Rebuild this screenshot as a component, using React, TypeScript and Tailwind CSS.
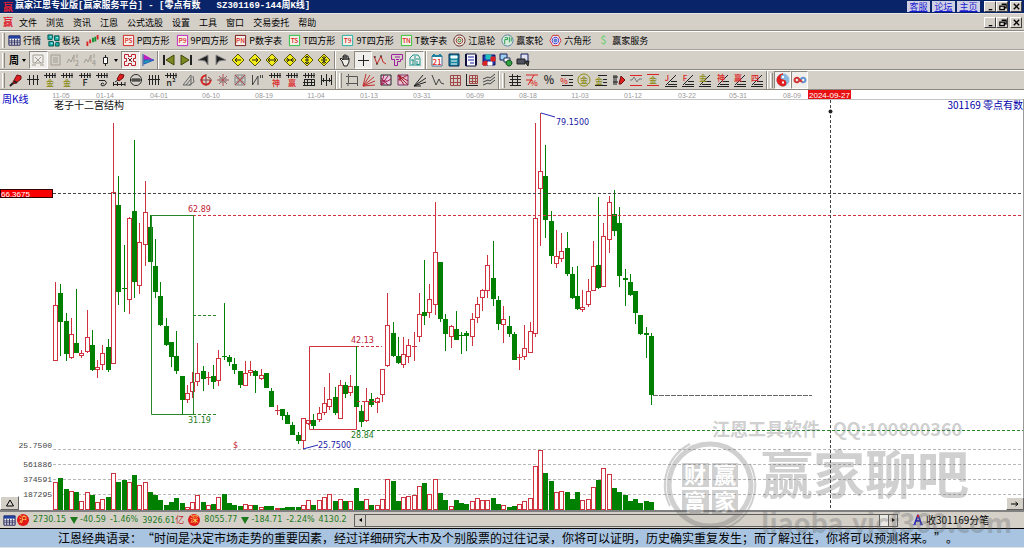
import React from "react";

type Mark = {
  d?: string;
  s?: string;
  f?: string;
  w?: number;
  t?: string;
  x?: number;
  y?: number;
  size?: number;
};

type IconDef = { name: string; marks: Mark[]; pressed?: boolean };

// [direction, high, body top, body bottom, low, volume top]
type Candle = ["r" | "g", number, number, number, number, number];

const RED = "#cf3340";
const GREEN = "#008000";
const K = "#222222";
const R = "#dd2222";
const Y = "#8a8a10";
const G = "#a09c94";

const candles: Candle[] = [
  ["r", 282, 305, 361, 361, 482],
  ["g", 284, 293, 322, 356, 478],
  ["g", 313, 321, 354, 361, 489],
  ["r", 318, 334, 358, 359, 491],
  ["g", 289, 343, 353, 353, 492],
  ["r", 350, 353, 356, 358, 501],
  ["r", 310, 337, 352, 353, 492],
  ["g", 330, 345, 370, 371, 495],
  ["r", 360, 367, 370, 378, 502],
  ["r", 345, 353, 365, 370, 499],
  ["g", 339, 347, 370, 372, 497],
  ["r", 123, 192, 364, 364, 473],
  ["g", 176, 205, 292, 305, 482],
  ["g", 245, 288, 289, 312, 480],
  ["r", 217, 218, 300, 314, 482],
  ["g", 140, 211, 282, 298, 475],
  ["r", 223, 242, 286, 294, 485],
  ["r", 181, 212, 245, 266, 482],
  ["g", 215, 227, 262, 262, 492],
  ["g", 239, 266, 292, 298, 495],
  ["g", 282, 296, 325, 326, 500],
  ["g", 318, 326, 345, 346, 505],
  ["g", 342, 342, 357, 367, 502],
  ["g", 331, 356, 371, 374, 498],
  ["g", 376, 376, 400, 414, 503],
  ["r", 385, 393, 400, 403, 507],
  ["r", 372, 382, 392, 398, 502],
  ["r", 343, 373, 382, 386, 495],
  ["g", 366, 371, 379, 391, 502],
  ["r", 372, 377, 378, 385, 505],
  ["g", 365, 376, 382, 389, 504],
  ["r", 350, 358, 381, 386, 497],
  ["g", 303, 356, 357, 360, 494],
  ["g", 355, 357, 362, 366, 503],
  ["g", 358, 364, 370, 374, 505],
  ["g", 371, 371, 385, 388, 506],
  ["r", 361, 373, 386, 386, 504],
  ["r", 361, 370, 373, 376, 505],
  ["g", 370, 371, 376, 393, 505],
  ["r", 369, 375, 379, 380, 507],
  ["g", 373, 373, 388, 388, 506],
  ["g", 388, 391, 407, 407, 506],
  ["r", 405, 410, 411, 415, 508],
  ["g", 409, 409, 416, 420, 508],
  ["g", 412, 415, 424, 424, 507],
  ["g", 422, 425, 435, 435, 507],
  ["g", 432, 435, 441, 444, 507],
  ["r", 418, 418, 441, 449, 505],
  ["r", 420, 420, 424, 425, 500],
  ["g", 414, 420, 426, 429, 505],
  ["r", 407, 413, 420, 422, 500],
  ["r", 387, 403, 413, 415, 497],
  ["r", 373, 399, 407, 410, 494],
  ["g", 387, 397, 413, 415, 501],
  ["r", 380, 385, 419, 419, 499],
  ["g", 382, 385, 394, 398, 501],
  ["r", 375, 386, 393, 396, 501],
  ["g", 386, 386, 407, 407, 488],
  ["g", 405, 411, 422, 427, 501],
  ["r", 388, 401, 421, 422, 499],
  ["g", 393, 399, 405, 407, 505],
  ["r", 397, 398, 403, 413, 505],
  ["r", 369, 369, 395, 401, 499],
  ["r", 293, 325, 366, 367, 479],
  ["g", 322, 333, 356, 357, 481],
  ["g", 337, 356, 363, 364, 501],
  ["r", 337, 354, 365, 368, 497],
  ["r", 339, 345, 357, 363, 496],
  ["r", 332, 346, 347, 361, 495],
  ["r", 293, 314, 337, 342, 486],
  ["g", 260, 312, 316, 325, 483],
  ["r", 284, 299, 313, 318, 494],
  ["r", 202, 252, 305, 315, 479],
  ["g", 262, 262, 319, 322, 493],
  ["g", 314, 319, 334, 351, 500],
  ["r", 325, 326, 337, 348, 506],
  ["g", 311, 329, 340, 340, 500],
  ["g", 332, 335, 336, 354, 503],
  ["g", 331, 333, 336, 351, 504],
  ["r", 313, 319, 337, 346, 501],
  ["r", 297, 304, 318, 323, 498],
  ["r", 289, 290, 298, 311, 500],
  ["r", 255, 265, 291, 298, 500],
  ["g", 241, 278, 299, 306, 498],
  ["g", 296, 300, 324, 330, 504],
  ["r", 306, 319, 325, 343, 505],
  ["g", 316, 326, 334, 337, 507],
  ["g", 332, 334, 360, 360, 506],
  ["r", 354, 357, 358, 370, 504],
  ["r", 325, 348, 357, 360, 501],
  ["r", 322, 331, 353, 353, 498],
  ["r", 123, 218, 334, 337, 466],
  ["r", 113, 171, 189, 246, 450],
  ["g", 145, 176, 220, 238, 473],
  ["g", 211, 221, 256, 264, 481],
  ["r", 230, 256, 264, 268, 492],
  ["r", 233, 251, 259, 262, 491],
  ["g", 232, 248, 274, 276, 492],
  ["g", 267, 274, 298, 299, 499],
  ["g", 266, 296, 309, 310, 492],
  ["r", 290, 307, 310, 312, 500],
  ["r", 279, 291, 305, 307, 499],
  ["r", 241, 266, 291, 291, 487],
  ["g", 197, 265, 288, 289, 480],
  ["r", 223, 236, 287, 287, 468],
  ["r", 196, 202, 240, 253, 474],
  ["g", 190, 214, 231, 236, 488],
  ["g", 207, 223, 276, 287, 492],
  ["g", 269, 278, 280, 306, 495],
  ["g", 274, 282, 295, 296, 501],
  ["g", 291, 291, 313, 324, 499],
  ["g", 315, 315, 334, 335, 503],
  ["g", 327, 333, 335, 358, 501],
  ["g", 333, 336, 395, 405, 502],
];

const dates: [number, string][] = [
  [61, "11-05"],
  [105, "01-14"],
  [159, "04-01"],
  [211, "06-10"],
  [264, "08-19"],
  [316, "11-04"],
  [369, "01-13"],
  [422, "03-31"],
  [475, "06-09"],
  [528, "08-18"],
  [580, "11-03"],
  [633, "01-12"],
  [687, "03-22"],
  [738, "05-31"],
  [792, "08-09"],
];

const menus = ["文件", "浏览", "资讯", "江恩", "公式选股", "设置", "工具", "窗口", "交易委托", "帮助"];

const comb: Mark = { d: "M1 2.5H13M3.5 0V5M6.5 0V5M9.5 0V5M12 0V5", s: K };
const fan: Mark = { d: "M2 12L12 2M1 13.5H13M4 11.5H13M7 8.5H13", s: K };
const diamond: Mark = { d: "M7 1L13 7L7 13L1 7Z", s: "#55550a", f: "#f4ec18" };

const boxed = (t: string, c: string): Mark[] => [
  { d: "M1.5 1.5H12.5V12.5H1.5Z", s: c, f: "#f4efe6", w: 1 },
  { t, s: R, x: 7, y: 10, size: 7 },
];

const rings = (a: string, b: string, c: string): Mark[] => [
  { d: "M7 1A6 6 0 1 1 6.9 1Z", s: a, f: "#eeeae0", w: 1 },
  { d: "M7 3.5A3.5 3.5 0 1 1 6.9 3.5Z", s: b },
  { d: "M7 5.5A1.5 1.5 0 1 1 6.9 5.5Z", s: c },
];

const features: { label: string; marks: Mark[] }[] = [
  {
    label: "行情",
    marks: [
      { d: "M1 2H13V12H1Z", s: "#101050", f: "#ffffff" },
      { d: "M1 3.5H13", s: "#2040a0", w: 3 },
      { d: "M1 7.5H13M1 9.5H13M4 5V12M7 5V12M10 5V12", s: "#303060" },
    ],
  },
  {
    label: "板块",
    marks: [
      { d: "M1 1H6V6H1ZM8 2H13V7H8ZM2 8H7V13H2ZM9 9H13V13H9Z", s: "#06504c", f: "#18b0a8" },
      { d: "M3 3H5M10 4H12M4 10H6M6 5L9 10", s: "#d8ffff" },
    ],
  },
  {
    label: "K线",
    marks: [
      { d: "M1.5 8V13M4.5 6V10M12.5 1V6", s: R, w: 2 },
      { d: "M7.5 4V9M10 3V8", s: "#109030", w: 2 },
    ],
  },
  { label: "P四方形", marks: boxed("PS", "#d02020") },
  { label: "9P四方形", marks: boxed("P9", "#c020c0") },
  { label: "P数字表", marks: boxed("PN", "#701010") },
  { label: "T四方形", marks: boxed("TS", "#20c040") },
  { label: "9T四方形", marks: boxed("T9", "#20b0a0") },
  { label: "T数字表", marks: boxed("TN", "#30c030") },
  { label: "江恩轮", marks: rings("#602020", "#902828", "#107010") },
  {
    label: "赢家轮",
    marks: [
      { d: "M7 1A6 6 0 1 1 6.9 1Z", s: "#5080a0", f: "#d8ecdc" },
      { d: "M4 4H7V6H4V11M9 3V9M11 4V8", s: "#209848" },
    ],
  },
  {
    label: "六角形",
    marks: [
      { d: "M4 1.5H10L13 7L10 12.5H4L1 7Z", s: "#d03030", f: "#f0e8f0" },
      { d: "M7 3.5A3.5 3.5 0 1 1 6.9 3.5Z", s: "#3030d0" },
      { d: "M7 5.5A1.5 1.5 0 1 1 6.9 5.5Z", s: "#3030d0", f: "#60c0c0" },
    ],
  },
  { label: "赢家服务", marks: [{ t: "$", s: "#78d078", x: 7, y: 11, size: 12 }] },
];

const viewTools: IconDef[] = [
  {
    name: "叠加",
    pressed: true,
    marks: [{ d: "M2 2H12V10H2ZM4 4L10 10M10 4L4 10M1 12H5M9 12H13", s: G }],
  },
  { name: "文档", marks: [{ d: "M2 2H11V12H2ZM4 5H9M4 7H9M4 9H9", s: G }] },
  { name: "二分", marks: [{ d: "M1 10L3 6L5 9L8 2V9M11 1V5", s: G }, { t: "2", s: G, x: 11, y: 13, size: 7 }] },
  { name: "四分", marks: [{ d: "M1 10L3 6L5 9L8 2V9M11 1V5", s: G }, { t: "4", s: G, x: 11, y: 13, size: 7 }] },
];

const modeTools: IconDef[] = [
  {
    name: "区间",
    pressed: true,
    marks: [
      { d: "M1.5 1.5H5.5V3.5H8.5V1.5H12.5V5.5H10.5V8.5H12.5V12.5H8.5V10.5H5.5V12.5H1.5V8.5H3.5V5.5H1.5Z", s: "#c02030" },
      { d: "M5 5L9 9M9 5L6 8", s: "#602020" },
    ],
  },
  {
    name: "分布",
    marks: [
      { d: "M3 2L12 7H3Z", s: "#c020c0", f: "#c020c0" },
      { d: "M3 7H13L3 11Z", s: "#2060c0", f: "#20a0b0" },
      { d: "M2 1V13", s: "#2050a0" },
    ],
  },
];

const moveTools: IconDef[] = [
  { name: "首页", marks: [{ d: "M2 2V12", s: K, w: 2 }, { d: "M12 2V12L4 7Z", s: "#404808", f: "#7c8820" }] },
  { name: "末页", marks: [{ d: "M12 2V12", s: K, w: 2 }, { d: "M2 2V12L10 7Z", s: "#404808", f: "#7c8820" }] },
  { name: "左移", marks: [{ d: "M12 2V12L9 8L2 7Z", s: "#888", f: K }] },
  { name: "右移", marks: [{ d: "M2 2V12L5 8L12 7Z", s: "#888", f: K }] },
  { name: "向左", marks: [diamond, { d: "M10 7H4M6 5L4 7L6 9", s: K }] },
  { name: "向右", marks: [diamond, { d: "M4 7H10M8 5L10 7L8 9", s: K }] },
  { name: "横向放大", marks: [diamond, { d: "M3 7H11M5 5L3 7L5 9M9 5L11 7L9 9", s: K }] },
  { name: "横向缩小", marks: [diamond, { d: "M3 7H11M4 5L6 7L4 9M10 5L8 7L10 9", s: K }] },
  { name: "纵向放大", marks: [diamond, { d: "M7 3V11M5 5L7 3L9 5M5 9L7 11L9 9M5 7H9", s: K }] },
  { name: "纵向缩小", marks: [diamond, { d: "M7 3V11M5 4L7 6L9 4M5 10L7 8L9 10M4 7H10", s: K }] },
];

const cursorTools: IconDef[] = [
  { name: "平移", marks: [{ d: "M4 8L2 6L3 5L5 7V3H6V7V2H8V7V3H10V7V5H11V9L9 13H6Z", s: K, f: "#f0ede6" }] },
  { name: "十字光标", pressed: true, marks: [{ d: "M7.5 2V13M2 7.5H13", s: K }] },
  { name: "波段", marks: [{ d: "M1 3L4 11L6 7L8 3L10 9L13 11", s: "#c02828" }, { d: "M1 4H3M3 11H5M7 3H9", s: K }] },
  { name: "形态", marks: [{ d: "M2 1.5H12.5V6.5H10.5V8.5H7.5V12.5H4.5V6.5H1.5V1.5M5 4H10M6 6.5H9", s: "#a020a0" }] },
  {
    name: "智能",
    pressed: true,
    marks: [{ d: "M2 11V5L5 2H10L12 5V11L9 12V8M5 12V7M7 3V11M3 7H6M8 6H11M1 12H13", s: "#189088" }],
  },
];

const fileTools: IconDef[] = [
  {
    name: "日历",
    marks: [
      { d: "M2 3H12V13H2Z", s: "#507090", f: "#ffffff" },
      { d: "M2 3H12M4 1V4M10 1V4", s: "#2080a0", w: 2 },
      { t: "21", s: R, x: 7, y: 12, size: 8 },
    ],
  },
  {
    name: "计算器",
    marks: [
      { d: "M2 1H12V13H2Z", s: "#082858", f: "#1888a0" },
      { d: "M4 3H10V5H4Z", s: "#ffffff", f: "#d8f8f8" },
      { d: "M4 8H10M4 11H10", s: "#ffffff" },
    ],
  },
  {
    name: "记事",
    marks: [
      { d: "M2 1H12V13H2Z", s: "#101040", f: "#f8f8ff" },
      { d: "M4 4H10M4 7H10M6 10H10", s: "#2020a0" },
      { d: "M2 1V13M12 2V12", s: "#101040", w: 2 },
    ],
  },
  {
    name: "保存",
    marks: [
      { d: "M1 2H13V12H1Z", s: "#101060", f: "#2038b0" },
      { d: "M4 2H9V6H4Z", s: "#20c0c0", f: "#20c0c0" },
      { d: "M1 9L5 8V12H1ZM9 4H13V8H9Z", s: R, f: R },
      { d: "M6 9H10V12H6Z", s: "#ffffff", f: "#ffffff" },
    ],
  },
  {
    name: "同步",
    marks: [
      { d: "M1 1H8V7H1Z", s: "#102060", f: "#a0d0f0" },
      { d: "M5 5H11V9H5Z", s: "#203060", f: "#ffffff" },
      { d: "M10 7A3 3 0 1 1 9.9 7Z", s: "#084018", f: "#30a040" },
    ],
  },
  {
    name: "打印",
    marks: [
      { d: "M5 1H12V8H5Z", s: "#102060", f: "#e0e0f0" },
      { d: "M1 6H9V11H1Z", s: K, f: "#505060" },
      { d: "M9 9L12 13L13 8Z", s: K, f: "#404040" },
    ],
  },
];

const pencil: Mark[] = [
  { d: "M4 9L8 2L12 3L12 6L7 10L4 11Z", s: "#701010", f: "#e02020" },
  { d: "M1 13L4 10M5 8L8 10", s: K, w: 2 },
];

const gannTools: IconDef[] = [
  { name: "画笔", marks: pencil },
  { name: "等距", marks: [{ d: "M1 6.5H13M3.5 2V12M7.5 2V12M11.5 2V12", s: K }] },
  { name: "黄金一", marks: [comb, { t: "金", s: Y, x: 7, y: 13, size: 8 }] },
  { name: "黄金二", marks: [comb, { t: "金", s: Y, x: 7, y: 13, size: 8 }] },
  { name: "斐波", marks: [comb, { t: "F", s: K, x: 7, y: 13, size: 9 }] },
  { name: "螺旋", marks: [comb, { d: "M4 7.5H10Q13 10 10 12Q6 14 6 11Q7 9 9 11", s: K }] },
  {
    name: "标尺",
    marks: [
      { d: "M5 6L8 1L12 2L11 5L7 8Z", s: "#701010", f: "#e02020" },
      { d: "M1.5 9V13M5.5 9V13M9.5 9V13M13 9V13M1 11.5H13M3 9L6 7", s: K },
    ],
  },
  { name: "周期圆", marks: [{ d: "M7 1.5A5.5 5.5 0 1 1 6.9 1.5ZM1 7H13M4 5V9M6 5V9M8 5V9M10 5V9", s: K }] },
  { name: "四线", marks: [{ d: "M1 6.5H13M2.5 2V12M5.5 2V12M8.5 2V12M11.5 2V12", s: K }] },
  { name: "平方", marks: [comb, { t: "n²", s: K, x: 7, y: 13, size: 9 }] },
  { name: "三角", marks: [{ d: "M2 12L10 2V12ZM5 12L10 6M12 3L13 9L8 12", s: "#666666" }] },
  { name: "圆弧", marks: [{ d: "M7 2.5A4.5 4.5 0 1 0 11.5 7", s: R, w: 2 }, { d: "M1 7H13M7 1V13M9 4L12 6", s: "#804040" }] },
  { name: "星射", marks: [{ d: "M7 1V13M1 7H13M3 3L11 11M11 3L3 11", s: "#b05050" }, { d: "M4 5H10V9H4Z", s: "#888888" }] },
  { name: "方射", marks: [{ d: "M2 2H12V12H2ZM5 2V12M9 2V12M2 5H12M2 9H12", s: "#888888" }, { d: "M2 2L12 12M12 2L2 12", s: "#b04848" }] },
  { name: "波折", marks: [{ d: "M2.5 2V12L8 3V12M10.5 2V5M12.5 2V5", s: "#444444" }] },
  { name: "神线", marks: [comb, { t: "神", s: R, x: 8, y: 13, size: 8 }] },
  { name: "赢线", marks: [comb, { t: "赢", s: R, x: 7, y: 13, size: 8 }] },
  { name: "表格", marks: [comb, { d: "M2.5 6.5H12.5V12M2.5 6V12M5.5 6V13M9.5 6V13M1 9.5H13M1 12.5H13", s: K }] },
  { name: "对称", marks: [{ d: "M2.5 2V12M12.5 2V12M7.5 1V13M2 7.5H12M4.5 5V9M10.5 5V9", s: K }] },
];

const rays: Mark = { d: "M1 13L4 1M1 13L8 2M1 13L12 4M1 13L13 8M1 13L13 12", s: "#c03030" };

const shapeTools: IconDef[] = [
  { name: "矩形", marks: [{ d: "M3.5 3.5H12.5V10.5H3.5ZM1 3.5H3M3.5 1V3M12.5 10V13M1 10.5H3V13", s: "#555555" }] },
  { name: "扇形", marks: [rays] },
  { name: "框扇", marks: [{ d: "M2 2H12V12H2Z", s: K, f: "#e8c8e0" }, { d: "M2 12L5 2M2 12L9 3M2 12L12 6M2 5L9 12M1 8H8", s: "#a02050" }] },
  { name: "角扇", marks: [{ d: "M2 2H12V12H2Z", s: "#803070", f: "#e8c0d0" }, { d: "M2 2L12 12M2 2L12 8M2 2L8 12M2 7L12 2M4 2V8", s: "#a02030" }] },
  { name: "速度线", marks: [{ d: "M1 13L10 2M1 13L13 5M1 13L13 9M1 13H8", s: K }] },
  { name: "折线", marks: [{ d: "M1 2L5 12L8 6L10 10L13 11", s: "#444444" }] },
  { name: "网格", marks: [{ d: "M2.5 2.5H12.5V12.5H2.5ZM5.5 2V12M9.5 2V12M2 5.5H12M2 9.5H12", s: "#a04848" }] },
  { name: "量格", marks: [{ d: "M1.5 1V13M1 12.5H13", s: K }, { d: "M4.5 2.5H12.5V10.5H4.5ZM7.5 2V10M10.5 2V10M4 5.5H12M4 8.5H12", s: "#a04848" }] },
  { name: "平行", marks: [{ d: "M1 6L6 4L8 5L13 1M1 9L6 7L8 8L13 4M1 12L6 10L8 11L13 7", s: "#444444" }] },
];

const percentTools: IconDef[] = [
  { name: "梯形", marks: [{ d: "M4.5 1V13M9.5 2V12M1 3.5H13M2 6.5H13M1 9.5H13M2 12.5H13", s: K }] },
  { name: "斜率", marks: [{ d: "M1 2H13M3 12L9 2M1 7H7", s: R }, { t: "%", s: R, x: 9, y: 13, size: 8 }] },
  { name: "百分比", marks: [{ t: "%", s: K, x: 7, y: 11, size: 11 }] },
  { name: "百分线", marks: [{ d: "M1 2.5H13M9 6.5H13M9 9.5H13M2 12.5H13", s: K }, { t: "%", s: R, x: 4, y: 11, size: 8 }] },
  { name: "金圆", marks: [{ d: "M7 1A6 6 0 1 1 6.9 1Z", s: Y }, { t: "金", s: Y, x: 7, y: 10, size: 8 }] },
  { name: "金线", marks: [{ d: "M4 2.5H13M9 6.5H13M9 9.5H13M1 12.5H13", s: K }, { t: "金", s: Y, x: 5, y: 11, size: 8 }] },
  { name: "标注", marks: [{ d: "M2 2V12M4 2V12M1 4H6M1 9H6", s: K }, { d: "M7 11L9 3L13 7L9 11Z", s: "#701010", f: "#e02020" }] },
  { name: "通道", marks: [{ d: "M1 2.5H13M1 12.5H13", s: R }, { d: "M1 7H3L5 4L8 9L10 6H13", s: "#777777" }] },
  { name: "金带", marks: [{ d: "M1 1.5H13M1 12.5H13", s: R }, { t: "金", s: Y, x: 7, y: 10, size: 8 }] },
  { name: "江线", marks: [fan, { t: "J", s: R, x: 3, y: 8, size: 8 }] },
  { name: "斐线", marks: [fan, { t: "F", s: R, x: 4, y: 8, size: 8 }] },
  { name: "金扇", marks: [fan, { t: "金", s: Y, x: 5, y: 8, size: 8 }] },
  { name: "神扇", marks: [fan, { t: "神", s: R, x: 5, y: 8, size: 8 }] },
  { name: "赢扇", marks: [fan, { t: "赢", s: R, x: 5, y: 8, size: 8 }] },
  { name: "四扇", marks: [fan, { t: "四", s: R, x: 5, y: 8, size: 8 }] },
];

const yinTools: IconDef[] = [
  {
    name: "太极",
    pressed: true,
    marks: [
      { d: "M7 1A6 6 0 1 1 6.9 1Z", s: "#88b8e0", f: "#88b8e0" },
      { d: "M7 1A6 6 0 0 0 7 13A3 3 0 0 0 7 7A3 3 0 0 1 7 1Z", s: "#e02020", f: "#e02020" },
      { d: "M6 9.5H8M6 4H8", s: "#ffffff", w: 2 },
    ],
  },
  {
    name: "循环",
    pressed: true,
    marks: [
      { d: "M9 9Q12 10 12.5 7Q12 4 9 5L7 7", s: "#6090d0", w: 2 },
      { d: "M7 7L5 9Q2 10 1.5 7Q2 4 5 5L9 9", s: "#d03030", w: 2 },
    ],
  },
];

const Icon = ({ marks, className }: { marks: Mark[]; className?: string }) => (
  <svg viewBox="0 0 14 14" className={className ?? "h-[14px] w-[14px] shrink-0 overflow-visible"} aria-hidden="true">
    {marks.map((m, i) =>
      m.t ? (
        <text key={i} x={m.x} y={m.y} fontSize={m.size} fill={m.s} textAnchor="middle" fontWeight="500">
          {m.t}
        </text>
      ) : (
        <path key={i} d={m.d} stroke={m.s} strokeWidth={m.w ?? 1} fill={m.f ?? "none"} />
      )
    )}
  </svg>
);

const Grip = () => (
  <div className="mx-[2px] h-[15px] w-[3px] shrink-0 border-l border-r border-l-white border-r-[#8c8880]" />
);

const Divider = () => (
  <div className="mx-px h-[18px] w-[2px] shrink-0 border-l border-r border-l-[#8c8880] border-r-white" />
);

const BandBreak = () => (
  <div className="flex w-[8px] shrink-0 items-center justify-between pr-px">
    <div className="h-[18px] w-[2px] border-l border-r border-l-[#8c8880] border-r-white" />
    <div className="h-[15px] w-[3px] border-l border-r border-l-white border-r-[#8c8880]" />
  </div>
);

const ToolGroup = ({ tools, className }: { tools: IconDef[]; className: string }) => (
  <div className={`flex h-full shrink-0 items-center ${className}`}>
    {tools.map((tool) => (
      <button
        key={tool.name}
        title={tool.name}
        aria-label={tool.name}
        className={
          tool.pressed
            ? "flex h-[18px] flex-1 items-center justify-center border border-t-[#8c8880] border-r-white border-b-white border-l-[#8c8880] bg-[#f0eeea]"
            : "flex h-[18px] flex-1 items-center justify-center"
        }
      >
        <Icon marks={tool.marks} />
      </button>
    ))}
  </div>
);

const WindowButtons = () => (
  <div className="flex shrink-0">
    {[
      { name: "最小化", d: "M3 8.5H7" },
      { name: "还原", d: "M4 2.5H9V6.5H7M2 4.5H7V8.5H2Z" },
      { name: "关闭", d: "M2 2L8 8M8 2L2 8" },
    ].map((b) => (
      <button
        key={b.name}
        aria-label={b.name}
        className="flex h-[11px] w-[12px] items-center justify-center border border-t-white border-r-[#404040] border-b-[#404040] border-l-white bg-[#d4d0c8] last:ml-[2px]"
      >
        <svg viewBox="0 0 10 10" className="h-[9px] w-[9px]" aria-hidden="true">
          <path d={b.d} stroke="#000" strokeWidth="1.4" fill="none" />
        </svg>
      </button>
    ))}
  </div>
);

const Candles = () => (
  <g shapeRendering="crispEdges">
    {candles.map(([dir, high, top, bottom, low, vol], i) => {
      const x = Math.round(55 + i * 5.274);
      const c = dir === "r" ? RED : GREEN;
      const doji = bottom - top <= 1;
      return (
        <g key={i} stroke={c} fill={dir === "r" ? "#fff" : c}>
          <path d={`M${x + 0.5} ${high}V${low}`} />
          {doji ? (
            <path d={`M${x - 2} ${top + 0.5}H${x + 3}`} />
          ) : (
            <rect x={x - 1.5} y={top + 0.5} width="4" height={bottom - top - 1} />
          )}
          <rect x={x - 1.5} y={vol + 0.5} width="4" height={509 - vol} />
        </g>
      );
    })}
  </g>
);

const Chart = () => (
  <svg
    viewBox="0 90 1024 420"
    className="block h-auto w-full bg-white font-['DejaVu_Sans','Noto_Sans_CJK_SC',sans-serif]"
    role="img"
    aria-label="零点有数 周K线"
  >
    {/* date axis */}
    <path d="M53 99.5H1024" stroke="#c4c4c4" />
    <g className="font-['Liberation_Sans',sans-serif]" fontSize="7" fill="#999" textAnchor="middle">
      {dates.map(([x, label]) => (
        <text key={label} x={x} y="98">
          {label}
        </text>
      ))}
    </g>

    {/* volume and price levels */}
    <path d="M53 449.5H1024M53 464.5H1024M53 479.5H1024M53 494.5H1024" stroke="#b8b8b8" strokeDasharray="3 2" />
    <g className="font-['Liberation_Mono',monospace]" fontSize="8" fill="#444" textAnchor="end">
      <text x="52" y="448">25.7500</text>
      <text x="52" y="467">561886</text>
      <text x="52" y="482">374591</text>
      <text x="52" y="497">187295</text>
    </g>

    <Candles />

    <g fill="none">
      <path d="M53 193.5H1024" stroke="#444" strokeDasharray="3 2" />
      <path d="M193 215.5H1024M356 346.5H382M357 401.5H383" stroke={RED} strokeDasharray="3 2" />
      <path d="M357 430.5H1024M193 315.5H218M193 414.5H218" stroke="#2a862a" strokeDasharray="3 2" />
      <path d="M653 395.5H812" stroke="#666" strokeDasharray="5 1" />
      <path d="M151 215.5H193.5V414.5H151.5V215" stroke="#2a862a" />
      <path d="M356.5 407V429.5H309.5V346.5H356" stroke={RED} />
      <path d="M356.5 346V407" stroke={GREEN} />
      <path d="M830.5 100V510" stroke="#444" strokeDasharray="3 2" />
    </g>
    <circle cx="830.5" cy="111.5" r="2" fill="#222" />
    <path d="M541 113L555 117M303 449L318 445" stroke="#2828b8" fill="none" />

    <g fontSize="8">
      <text x="188" y="212" fill="#c02030">62.89</text>
      <text x="351" y="343" fill="#c02030">42.13</text>
      <text x="233" y="448" fill="#c02030">$</text>
      <text x="188" y="423" fill="#1c7a1c">31.19</text>
      <text x="351" y="438" fill="#1c7a1c">28.84</text>
      <text x="556" y="125" fill="#1818a8">79.1500</text>
      <text x="318" y="448" fill="#1818a8">25.7500</text>
    </g>

    <g className="font-['Noto_Sans_CJK_SC',sans-serif]" fontSize="10">
      <text x="2" y="103" fill="#0000c0">周K线</text>
      <text x="54" y="109" fill="#111">老子十二宫结构</text>
      <text x="1023" y="109" fill="#0000a8" textAnchor="end">301169 零点有数</text>
    </g>

    <g className="font-['Liberation_Sans',sans-serif]" fontSize="8" fill="#fff">
      <rect x="0.5" y="189.5" width="52" height="8" fill="#f80000" stroke="#300" />
      <text x="1" y="197">66.3675</text>
      <rect x="808" y="90" width="43" height="9" fill="#e81010" />
      <text x="809" y="98">2024-09-27</text>
    </g>
    <path d="M1023.5 99V510" stroke="#999" />
  </svg>
);

const Watermark = () => (
  <svg
    viewBox="0 0 364 128"
    className="pointer-events-none absolute right-0 bottom-0 h-[128px] w-[364px] font-['Noto_Sans_CJK_SC',sans-serif]"
    opacity="0.3"
    aria-hidden="true"
  >
    <g fill="#666" fontWeight="bold">
      <text x="52" y="16" fontSize="18">江恩工具软件</text>
      <text x="173" y="16" fontSize="18">QQ:100800360</text>
      <text x="101" y="74" fontSize="52">赢家聊吧</text>
      <text x="101" y="113" fontSize="27">liaoba.yjcf360.com</text>
      <path d="M22 43H49V67H22ZM52 43H78V67H52ZM22 70H49V94H22ZM52 70H78V94H52Z" />
    </g>
    <circle cx="50" cy="65" r="41" fill="none" stroke="#666" strokeWidth="5" />
    <path d="M10 86A46 46 0 0 1 30 24M90 44A46 46 0 0 1 66 108" fill="none" stroke="#666" strokeWidth="2" />
    <g fill="#fff" fontSize="22" fontWeight="bold">
      <text x="24" y="63">财</text>
      <text x="54" y="63">赢</text>
      <text x="24" y="90">富</text>
      <text x="54" y="90">家</text>
    </g>
  </svg>
);

type IndexQuoteProps = { badge: string; last: string; change: string; percent: string; amount: string; unit?: string };

const IndexQuote = ({ badge, last, change, percent, amount, unit }: IndexQuoteProps) => (
  <div className="flex items-center gap-[4px] text-[8px] text-[#1c7a1c]">
    <span className="flex h-[12px] w-[12px] items-center justify-center rounded-full bg-[#e01818] text-[8px] text-[#ffe860]">
      {badge}
    </span>
    <span>{last}</span>
    <span className="flex items-center gap-[2px]">
      <span className="h-0 w-0 border-x-4 border-t-7 border-x-transparent border-t-[#1c7a1c]" />
      {change}
    </span>
    <span>{percent}</span>
    <span>
      {amount}
      {unit && <span className="text-[9px] text-[#c02828]">{unit}</span>}
    </span>
  </div>
);

const App = () => {
  return (
    <div className="relative w-full overflow-hidden bg-[#d4d0c8] font-['Noto_Sans_CJK_SC',sans-serif] text-[9px] leading-none text-black">
      <header className="flex h-[14px] items-center border-b border-[#e8e6e0] bg-[#0a246a] pr-[2px] pl-[3px]">
        <span className="text-[10px] font-bold text-[#e02030]">赢</span>
        <h1 className="ml-[2px] flex-1 font-['Liberation_Mono','Noto_Sans_CJK_SC',monospace] text-[9px] leading-[13px] font-bold whitespace-pre text-white">
          赢家江恩专业版[赢家服务平台] - [零点有数&nbsp;&nbsp;&nbsp;SZ301169-144周K线]
        </h1>
        <nav className="mr-[4px] flex gap-[2px]">
          {["客服", "论坛", "主页"].map((l) => (
            <a key={l} href="#" className="flex h-[11px] w-[23px] items-center justify-center bg-[#d0d0e4] text-[#1818d0] underline">
              {l}
            </a>
          ))}
        </nav>
        <WindowButtons />
      </header>

      <div className="flex h-[17px] items-center border-b border-[#8c8880] pr-[2px] pl-[3px]">
        <span className="text-[10px] font-bold text-[#e02030]">赢</span>
        <nav className="ml-[6px] flex flex-1 gap-[9px]">
          {menus.map((m) => (
            <button key={m}>{m}</button>
          ))}
        </nav>
        <WindowButtons />
      </div>

      <div className="flex h-[19px] items-center border-t border-b border-t-white border-b-[#a8a49c]">
        <Grip />
        <div className="ml-px flex gap-[6px]">
          {features.map((f) => (
            <button key={f.label} className="flex items-center gap-[2px] whitespace-nowrap">
              <Icon marks={f.marks} className="h-[13px] w-[13px] overflow-visible" />
              {f.label}
            </button>
          ))}
        </div>
      </div>

      <div className="flex h-[20px] items-center border-t border-b border-t-white border-b-[#8c8880]">
        <Grip />
        <button className="flex w-[22px] shrink-0 items-center gap-[3px] pl-[2px] text-[10px] font-bold">
          周<span className="h-0 w-0 border-x-2 border-t-3 border-x-transparent border-t-black" />
        </button>
        <ToolGroup tools={viewTools} className="w-[69px]" />
        <button className="flex w-[23px] shrink-0 items-center gap-[2px]" aria-label="K线样式">
          <Icon marks={[{ d: "M7.5 2V13", s: K }, { d: "M5.5 4.5H9.5V10.5H5.5Z", s: K, f: "#fff" }]} />
          <span className="h-0 w-0 border-x-2 border-t-3 border-x-transparent border-t-black" />
        </button>
        <ToolGroup tools={modeTools} className="w-[35px]" />
        <Divider />
        <ToolGroup tools={moveTools} className="w-[173px]" />
        <Divider />
        <ToolGroup tools={cursorTools} className="w-[87px]" />
        <Divider />
        <ToolGroup tools={fileTools} className="w-[104px]" />
      </div>

      <div className="flex h-[20px] items-center border-t border-b border-t-white border-b-[#8c8880]">
        <Grip />
        <ToolGroup tools={gannTools} className="w-[328px]" />
        <BandBreak />
        <ToolGroup tools={shapeTools} className="w-[155px]" />
        <BandBreak />
        <ToolGroup tools={percentTools} className="w-[260px]" />
        <BandBreak />
        <ToolGroup tools={yinTools} className="w-[34px]" />
      </div>

      <main className="relative">
        <Chart />
        <button
          aria-label="展开"
          className="absolute bottom-0 left-0 flex h-[14px] w-[19px] items-center justify-center border border-t-white border-r-[#606060] border-b-[#606060] border-l-white bg-[#d4d0c8]"
        >
          <svg viewBox="0 0 8 8" className="h-[8px] w-[8px]" aria-hidden="true">
            <path d="M4 1L7.5 7H0.5Z" fill="none" stroke="#000" />
          </svg>
        </button>
        <button
          aria-label="向右滚动"
          className="absolute right-0 bottom-0 flex h-[13px] w-[18px] items-center justify-center border border-t-white border-r-[#606060] border-b-[#606060] border-l-white bg-[#d4d0c8]"
        >
          <svg viewBox="0 0 8 8" className="h-[8px] w-[8px]" aria-hidden="true">
            <path d="M0 4H7M4.5 2L7 4L4.5 6" fill="none" stroke="#000" />
          </svg>
        </button>
      </main>

      <div className="flex h-[18px] items-center border-t-2 border-[#808080] pl-[3px] font-['DejaVu_Sans','Noto_Sans_CJK_SC',sans-serif]">
        <Icon marks={features[0].marks} className="h-[13px] w-[13px] shrink-0" />
        <div className="ml-px flex w-[337px] shrink-0 gap-[4px] whitespace-nowrap">
          <IndexQuote badge="沪" last="2730.15" change="-40.59" percent="-1.46%" amount="3926.61" unit="亿" />
          <IndexQuote badge="深" last="8055.77" change="-184.71" percent="-2.24%" amount="4130.2" />
        </div>
        <div className="flex h-[13px] flex-1 border border-[#606060] bg-[#ebe9e4]">
          <button aria-label="向左" className="flex w-[11px] items-center justify-center border-r border-[#606060] bg-[#d4d0c8]">
            <span className="h-0 w-0 border-y-2 border-r-3 border-y-transparent border-r-black" />
          </button>
          <div className="flex-1 border-r border-[#606060] bg-[#d4d0c8]" />
          <div className="w-[8px]" />
          <button aria-label="向右" className="flex w-[9px] items-center justify-center border-l border-[#606060] bg-[#d4d0c8]">
            <span className="h-0 w-0 border-y-2 border-l-3 border-y-transparent border-l-black" />
          </button>
        </div>
        <div className="flex h-full w-[126px] shrink-0 items-center gap-[2px] pl-[14px] font-['Noto_Sans_CJK_SC',sans-serif]">
          <Icon
            marks={[
              { d: "M7 1L3 12M7 1L11 12M4 8H10", s: "#2828b8", w: 2 },
              { d: "M1 12.5H5M9 12.5H13", s: "#2828b8" },
              { d: "M7 1V4", s: R, w: 2 },
            ]}
            className="h-[12px] w-[12px]"
          />
          <span className="text-[10px]">收301169分笔</span>
        </div>
      </div>

      <footer className="h-[20px] overflow-hidden border-t border-b border-t-black border-b-[#e0e4e8] bg-[#a8c4e0] pl-[58px] text-[12px] leading-[18px] whitespace-nowrap [text-spacing-trim:space-all]">
        江恩经典语录：“时间是决定市场走势的重要因素，经过详细研究大市及个别股票的过往记录，你将可以证明，历史确实重复发生；而了解过往，你将可以预测将来。”。
      </footer>

      <Watermark />
    </div>
  );
};

export default App;
